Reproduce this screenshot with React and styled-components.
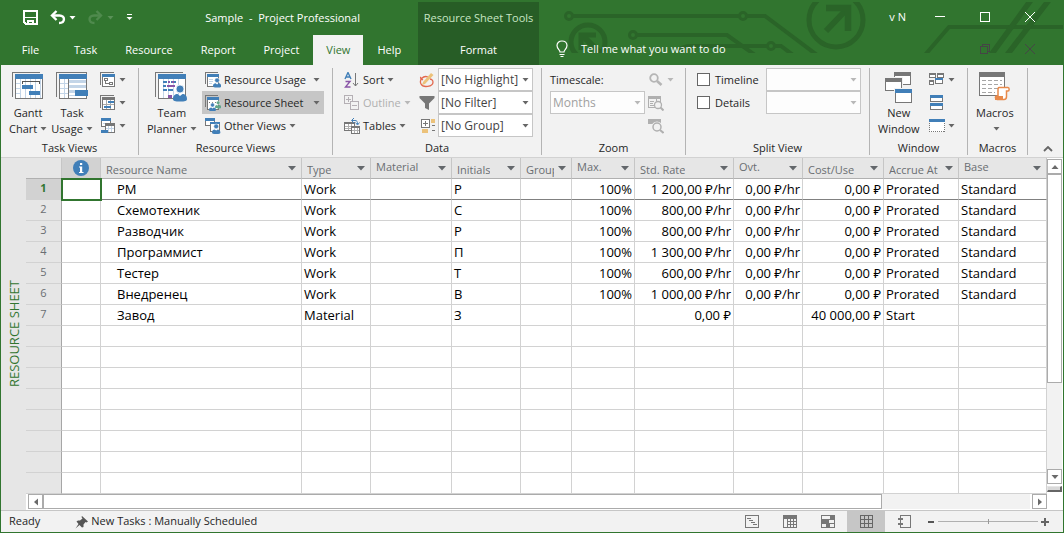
import styled, { createGlobalStyle, ThemeProvider } from "styled-components";

const theme = {
  green: "#31752f",
  darkGreen: "#275d26",
  ribbon: "#f2f2f2",
  header: "#e6e6e6",
  selected: "#c6c6c6",
  line: "#d2d2d2",
  text: "#262626",
};

const G = "#777777";
const B = "#417fb8";
const L = "#c3d5e8";

const columns = [
  { key: "name", label: "Resource Name", width: 201, indent: true },
  { key: "type", label: "Type", width: 69 },
  { key: "material", label: "Material", width: 81, raised: true },
  { key: "initials", label: "Initials", width: 69 },
  { key: "group", label: "Group", width: 51 },
  { key: "max", label: "Max.", width: 63, raised: true, right: true },
  { key: "std", label: "Std. Rate", width: 99, right: true },
  { key: "ovt", label: "Ovt.", width: 69, raised: true, right: true },
  { key: "cost", label: "Cost/Use", width: 81, right: true },
  { key: "accrue", label: "Accrue At", width: 75 },
  { key: "base", label: "Base", raised: true },
];

function worker(name, initials, std) {
  return {
    name,
    type: "Work",
    initials,
    max: "100%",
    std: `${std} ₽/hr`,
    ovt: "0,00 ₽/hr",
    cost: "0,00 ₽",
    accrue: "Prorated",
    base: "Standard",
  };
}

const resources = [
  worker("PM", "P", "1 200,00"),
  worker("Схемотехник", "С", "800,00"),
  worker("Разводчик", "Р", "800,00"),
  worker("Программист", "П", "1 300,00"),
  worker("Тестер", "Т", "600,00"),
  worker("Внедренец", "В", "1 000,00"),
  {
    name: "Завод",
    type: "Material",
    initials: "З",
    std: "0,00 ₽",
    cost: "40 000,00 ₽",
    accrue: "Start",
  },
];

const ROW_COUNT = 15;

/* ---------- icons ---------- */

function Icon({ w = 16, h = 16, smooth, children }) {
  return (
    <svg
      width={w}
      height={h}
      viewBox={`0 0 ${w} ${h}`}
      fill="none"
      shapeRendering={smooth ? "auto" : "crispEdges"}
      aria-hidden="true"
    >
      {children}
    </svg>
  );
}

function Caret({ color = "#666666" }) {
  return (
    <Icon w={7} h={4} smooth>
      <path d="M0.5 0H6.5L3.5 3.5Z" fill={color} />
    </Icon>
  );
}

function Frame({ x, y, w, h, bar, color = B }) {
  return (
    <>
      <rect x={x + 0.5} y={y + 0.5} width={w - 1} height={h - 1} fill="#fff" stroke={G} />
      <rect x={x} y={y} width={w} height={bar} fill={color} />
    </>
  );
}

function Person({ x, y, s = 1, color = B }) {
  return (
    <g transform={`translate(${x} ${y}) scale(${s})`} shapeRendering="auto">
      <circle cx="7" cy="4" r="4" fill={color} stroke="#fff" strokeWidth="0.8" />
      <path d="M0 14C0 10.500 2 9 4.500 9L7 11L9.500 9C12 9 14 10.500 14 14C14 16 12 16.500 7 16.500S0 16 0 14Z" fill={color} />
    </g>
  );
}

function GanttIcon() {
  return (
    <Icon w={32} h={32}>
      <path d="M0.5 25V0.500H28" stroke={G} />
      <Frame x={3} y={2} w={28} h={25} bar={5} />
      <path d="M8.500 7V26M13.500 7V26M18.500 7V26M23.500 7V26M28.500 7V26" stroke={L} />
      <path d="M4 11.500H8M4 16.500H8M4 21.500H8" stroke={L} />
      <path d="M10.500 12V9.500H27.500V12" stroke="#555" />
      <rect x="10" y="13" width="11" height="4" rx="1" fill={B} />
      <rect x="17" y="19" width="11" height="4" rx="1" fill={B} />
    </Icon>
  );
}

function TaskUsageIcon() {
  return (
    <Icon w={32} h={32}>
      <path d="M0.5 25V0.500H30.500V4" stroke={G} />
      <Frame x={3} y={2} w={28} h={25} bar={5} />
      <path d="M4 11.500H12M4 16.500H12M4 21.500H12M8.500 7V26" stroke={L} />
      <path d="M12.500 7V26" stroke={G} />
      <rect x="13" y="8" width="17" height="3" fill={L} />
      <rect x="13" y="13" width="17" height="3" fill={L} />
      <rect x="13" y="18" width="6" height="3" fill={L} />
      <path d="M13 23.500H30" stroke={L} />
      <rect x="19" y="18" width="13" height="6" rx="1" fill={B} />
    </Icon>
  );
}

function NetworkIcon() {
  return (
    <Icon>
      <path d="M0.500 13V0.500H14" stroke={G} />
      <Frame x={2} y={2} w={13} h={13} bar={3} />
      <rect x="4.500" y="6.500" width="3" height="2" stroke={G} />
      <rect x="9.500" y="10.500" width="3" height="2" stroke={G} />
      <path d="M5.500 9V11.500H9" stroke={G} />
    </Icon>
  );
}

function CalendarIcon() {
  return (
    <Icon>
      <path d="M0.500 13V0.500H14" stroke={G} />
      <Frame x={2} y={2} w={13} h={13} bar={3} color={G} />
      <path d="M6.500 5V14M10.500 5V14M3 9.500H14" stroke="#aaa" />
      <rect x="8" y="6" width="6" height="2" fill={B} />
      <rect x="4" y="11" width="7" height="2" fill={B} />
    </Icon>
  );
}

function OtherTaskIcon() {
  return (
    <Icon>
      <Frame x={1} y={0} w={10} h={9} bar={3} />
      <path d="M3 5.500H9" stroke={L} />
      <Frame x={5} y={5} w={10} h={10} bar={3} color={G} />
      <path d="M8.500 8V14M11.500 8V14M6 10.500H14" stroke={L} />
      <rect x="1" y="12" width="7" height="3" rx="1" fill={B} />
    </Icon>
  );
}

function TeamPlannerIcon() {
  return (
    <Icon w={33} h={32}>
      <path d="M0.500 25V0.500H28" stroke={G} />
      <Frame x={3} y={2} w={28} h={25} bar={5} />
      <path d="M8.500 7V26M13.500 7V26M18.500 7V26M23.500 7V26" stroke={L} />
      <path d="M8 10H12M16 10H21M8 18H12M13 18H18M8 14H11" stroke={B} strokeWidth="2" />
      <path d="M13 10H15M12 14H20M17 10H19" stroke="#8a56a8" strokeWidth="2" />
      <rect x="13" y="23" width="4" height="3" fill="#8a56a8" />
      <Person x={18} y={13} />
    </Icon>
  );
}

function ResourceUsageIcon() {
  return (
    <Icon>
      <path d="M0.500 12V0.500H13" stroke={G} />
      <Frame x={2} y={2} w={12} h={13} bar={3} />
      <path d="M4 7.500H8M4 9.500H8M4 11.500H7" stroke={L} />
      <Person x={8} y={6} s={0.58} />
    </Icon>
  );
}

function ResourceSheetIcon() {
  return (
    <Icon>
      <path d="M0.500 12V0.500H13" stroke={G} />
      <Frame x={2} y={2} w={12} h={13} bar={3} />
      <path d="M4 7.500H12" stroke={G} strokeDasharray="1 2" />
      <Person x={10} y={6} s={0.45} color="#5fa58a" />
      <Person x={4} y={8} s={0.5} />
    </Icon>
  );
}

function OtherViewsIcon() {
  return (
    <Icon>
      <Frame x={0} y={0} w={10} h={8} bar={3} />
      <Frame x={5} y={4} w={10} h={10} bar={2} />
      <Person x={7} y={6} s={0.6} />
    </Icon>
  );
}

function SortIcon() {
  return (
    <Icon smooth>
      <path d="M1 7L4 0.500L7 7M2 5H6" stroke={B} strokeWidth="1.400" />
      <path d="M1.500 9.500H6L1.500 15H6.500" stroke="#8a56a8" strokeWidth="1.400" />
      <path d="M11.500 1V14M9 11L11.500 14L14 11" stroke={G} />
    </Icon>
  );
}

function OutlineIcon() {
  return (
    <Icon>
      <rect x="0.500" y="0.500" width="8" height="8" stroke="#b5b0b5" />
      <path d="M4.500 2V7M2 4.500H7" stroke="#b5b0b5" />
      <rect x="6.500" y="6.500" width="8" height="8" fill="#f2f2f2" stroke="#b5b0b5" />
      <path d="M8 10.500H13" stroke="#b5b0b5" />
    </Icon>
  );
}

function TablesIcon() {
  return (
    <Icon>
      <Frame x={0} y={4} w={11} h={9} bar={2} color={G} />
      <path d="M1 8.500H10M1 10.500H10M4.500 6V12M7.500 6V12" stroke="#b0b0b0" />
      <Frame x={7} y={8} w={9} h={8} bar={2} color={G} />
      <path d="M8 12.500H15M10.500 10V15M13.500 10V15" stroke="#b0b0b0" />
      <path d="M8 2.500H11C13 2.500 13.500 3.500 13.500 6M10 0L7.500 2.500L10 5M11.500 4.500L13.500 7L15.500 4.500" stroke={B} shapeRendering="auto" />
    </Icon>
  );
}

function HighlightIcon() {
  return (
    <Icon smooth>
      <path d="M9 5C4 3 0 8 2 12C4 16 14 15 14 10C14 8 12 7 11 7M4 8C2 7 1 6 2 5" stroke="#e2694f" strokeWidth="1.300" />
      <path d="M3 13L4 10L12 1L14.500 3L6 12Z" fill="#ecc27a" />
    </Icon>
  );
}

function FilterIcon() {
  return (
    <Icon smooth>
      <path d="M0.500 1H15.500V3L10 8.500V15L6 13V8.500L0.500 3Z" fill={G} />
    </Icon>
  );
}

function GroupByIcon() {
  return (
    <Icon>
      <rect x="2.500" y="1.500" width="8" height="8" fill="#fff" stroke={G} />
      <path d="M6.500 3V8M4 5.500H9" stroke={G} />
      <rect x="12" y="1" width="4" height="4" fill="#ecc27a" />
      <path d="M13 7.500H16M13 12.500H16" stroke={G} />
      <rect x="3" y="11" width="6" height="4" fill="#ecc27a" />
    </Icon>
  );
}

function ZoomIcon() {
  return (
    <Icon smooth>
      <circle cx="6" cy="6" r="3.800" stroke="#b5b5b5" strokeWidth="1.800" />
      <path d="M9 9L13.500 13" stroke="#b5b5b5" strokeWidth="2.600" />
    </Icon>
  );
}

function EntireProjectIcon() {
  return (
    <Icon>
      <rect x="0.500" y="1.500" width="12" height="11" stroke="#b0b0b0" />
      <rect x="0" y="1" width="13" height="3" fill="#b0b0b0" />
      <path d="M2 6.500H6M2 8.500H5M2 10.500H6M8.500 4V6" stroke="#b0b0b0" />
      <g shapeRendering="auto">
        <circle cx="10" cy="10" r="3.500" fill="#f2f2f2" stroke="#b0b0b0" strokeWidth="1.300" />
        <path d="M12.500 12.500L15.500 15.500" stroke="#b0b0b0" strokeWidth="2" />
      </g>
    </Icon>
  );
}

function SelectedTasksIcon() {
  return (
    <Icon>
      <rect x="0" y="1" width="13" height="5" fill="#b0b0b0" />
      <g shapeRendering="auto">
        <circle cx="9" cy="9" r="4" fill="#f2f2f2" stroke="#f2f2f2" strokeWidth="3" />
        <circle cx="9" cy="9" r="4" stroke="#b0b0b0" strokeWidth="1.500" />
        <path d="M12 12L15.500 15" stroke="#b0b0b0" strokeWidth="2" />
      </g>
    </Icon>
  );
}

function NewWindowIcon() {
  return (
    <Icon w={28} h={32}>
      <Frame x={9} y={0} w={17} h={13} bar={4} color={G} />
      <rect x="0" y="5" width="18" height="15" fill="#f2f2f2" />
      <Frame x={0} y={6} w={17} h={13} bar={4} color={G} />
      <rect x="9" y="16" width="19" height="15" fill="#f2f2f2" />
      <Frame x={10} y={17} w={17} h={14} bar={4} />
    </Icon>
  );
}

function SwitchIcon() {
  return (
    <Icon>
      <Frame x={0} y={1} w={7} h={5} bar={2} color={G} />
      <Frame x={8} y={1} w={7} h={5} bar={2} color={G} />
      <Frame x={0} y={8} w={5} h={5} bar={2} color={G} />
      <Frame x={6} y={6} w={8} h={6} bar={2} />
    </Icon>
  );
}

function ArrangeIcon() {
  return (
    <Icon>
      <Frame x={1} y={0} w={13} h={7} bar={3} />
      <Frame x={1} y={8} w={13} h={7} bar={3} />
    </Icon>
  );
}

function HideIcon() {
  return (
    <Icon>
      <rect x="0.500" y="1.500" width="15" height="12" fill="#fff" stroke={G} strokeDasharray="1 1" />
      <rect x="0" y="1" width="16" height="3" fill={B} />
    </Icon>
  );
}

function MacrosIcon() {
  return (
    <Icon w={32} h={32}>
      <Frame x={0} y={0} w={26} h={24} bar={5} color={G} />
      <path d="M3 8.500H23M3 12.500H23M3 16.500H23M3 20.500H16" stroke="#a6a6a6" strokeDasharray="4 2" />
      <path
        d="M20 15.500H29C30.500 15.500 30.500 19 29 19H27.500V24.500C27.500 27 26 27.500 25 27.500H18C16 27.500 16 24 17.500 24H19V18C19 16.500 19.500 15.500 20 15.500Z"
        fill="#fff"
        stroke="#e8894a"
        strokeWidth="1.500"
        shapeRendering="auto"
      />
      <rect x="16" y="24" width="8" height="4" rx="1" fill="#e8894a" />
    </Icon>
  );
}

function CircuitArt() {
  return (
    <Circuit width="534" height="53" viewBox="0 0 534 53" fill="none" stroke="#2a6428" strokeWidth="4" aria-hidden="true">
      <circle cx="40" cy="16" r="3.500" strokeWidth="3" />
      <circle cx="214" cy="16" r="3.500" strokeWidth="3" />
      <path d="M44 16H210M218 16H236L288 55" />
      <circle cx="104" cy="35" r="3.500" strokeWidth="3" />
      <path d="M108 35H198L226 55" />
      <circle cx="242" cy="46" r="3.500" strokeWidth="3" />
      <path d="M150 50C154 46 158 46 162 46H238M246 46H252L264 55" />
      <circle cx="307" cy="20" r="27" strokeWidth="5" />
      <path d="M297 31L316 11" strokeWidth="6" />
      <path d="M297 8H319V31" strokeWidth="6.500" />
      <circle cx="59" cy="42" r="17" strokeWidth="5" />
      <path d="M54 36L70 52" strokeWidth="6" />
      <path d="M67 35H52V50" strokeWidth="5" />
      <path d="M396 55L420 27H534" />
      <path d="M462 55L502 0M478 55L520 0" strokeWidth="5.500" />
    </Circuit>
  );
}

/* ---------- small pieces ---------- */

function BigTool({ icon, lines, caret = true }) {
  return (
    <BigButton type="button">
      {icon}
      <span>
        {lines[0]}
        <br />
        {lines[1]}
        {caret && <Caret />}
      </span>
    </BigButton>
  );
}

function Tool({ icon, label, caret = true, disabled, active, wide, name }) {
  return (
    <ToolButton type="button" disabled={disabled} $active={active} $wide={wide} aria-label={name}>
      {icon}
      {label && <span>{label}</span>}
      {caret && <Caret color={disabled ? "#b8b8b8" : "#666666"} />}
    </ToolButton>
  );
}

function Combo({ name, value, disabled }) {
  return (
    <ComboBox>
      <ComboSelect aria-label={name} disabled={disabled} defaultValue={value}>
        <option>{value}</option>
      </ComboSelect>
      <Caret color={disabled ? "#b8b8b8" : "#666666"} />
    </ComboBox>
  );
}

function RibbonGroup({ title, children }) {
  return (
    <Group aria-label={title}>
      <GroupBody>{children}</GroupBody>
      <GroupTitle>{title}</GroupTitle>
    </Group>
  );
}

/* ---------- sections ---------- */

function Header() {
  return (
    <Top>
      <CircuitArt />
      <TopColumn>
        <TitleRow>
          <QuickAccess>
            <IconButton type="button" aria-label="Save">
              <Icon w={15} h={15}>
                <path d="M1 1H14V14H3L1 12Z" stroke="#fff" strokeWidth="2" />
                <path d="M2 7.500H13" stroke="#fff" />
                <path d="M5 14V11H10V14" stroke="#fff" strokeWidth="2" />
              </Icon>
            </IconButton>
            <IconButton type="button" aria-label="Undo">
              <Icon smooth>
                <path d="M2 5.500H9.500C15.500 5.500 15.500 13 9 13" stroke="#fff" strokeWidth="2.400" />
                <path d="M6.500 1L2 5.500L6.500 10" stroke="#fff" strokeWidth="2.400" />
              </Icon>
              <Caret color="#fff" />
            </IconButton>
            <IconButton type="button" aria-label="Redo" disabled>
              <Icon smooth>
                <path d="M13 5.500H6C0 5.500 0 13 6.500 13" stroke="#4f8a4d" strokeWidth="2.400" />
                <path d="M8.500 1L13 5.500L8.500 10" stroke="#4f8a4d" strokeWidth="2.400" />
              </Icon>
              <Caret color="#5a9158" />
            </IconButton>
            <IconButton type="button" aria-label="Customize">
              <Icon w={7} h={7} smooth>
                <path d="M1 0H6V1H1ZM0.500 3H6.500L3.500 6Z" fill="#fff" />
              </Icon>
            </IconButton>
          </QuickAccess>
          <DocTitle>Sample&nbsp; -&nbsp; Project Professional</DocTitle>
        </TitleRow>
        <Tabs aria-label="Ribbon tabs">
          <FileTab href="#file">File</FileTab>
          <Tab href="#task">Task</Tab>
          <Tab href="#resource">Resource</Tab>
          <Tab href="#report">Report</Tab>
          <Tab href="#project">Project</Tab>
          <Tab href="#view" $active>
            View
          </Tab>
          <Tab href="#help">Help</Tab>
        </Tabs>
      </TopColumn>
      <ContextTab>
        <ContextTitle>Resource Sheet Tools</ContextTitle>
        <Tab href="#format">Format</Tab>
      </ContextTab>
      <TopColumn $grow>
        <ControlRow>
          <User>v N</User>
          <WindowButton type="button" aria-label="Minimize">
            <Icon w={10} h={10}>
              <path d="M0 4.500H10" stroke="#fff" />
            </Icon>
          </WindowButton>
          <WindowButton type="button" aria-label="Maximize">
            <Icon w={10} h={10}>
              <rect x="0.500" y="0.500" width="9" height="9" stroke="#fff" />
            </Icon>
          </WindowButton>
          <WindowButton type="button" aria-label="Close">
            <Icon w={10} h={10} smooth>
              <path d="M0 0L10 10M10 0L0 10" stroke="#fff" />
            </Icon>
          </WindowButton>
        </ControlRow>
        <SecondRow>
          <TellMe type="button">
            <Icon w={12} h={18} smooth>
              <path d="M4 12C4 10 1 9 1 5.500C1 3 3 1 6 1S11 3 11 5.500C11 9 8 10 8 12Z" stroke="#fff" strokeWidth="1.200" />
              <path d="M3.500 14.500H8.500M4.500 16.500H7.500" stroke="#fff" />
            </Icon>
            Tell me what you want to do
          </TellMe>
          <WindowButton type="button" aria-label="Restore document">
            <Icon w={10} h={10}>
              <rect x="0.500" y="2.500" width="7" height="7" stroke="#454545" />
              <path d="M2.500 2V0.500H9.500V7.500H8" stroke="#454545" />
            </Icon>
          </WindowButton>
          <WindowButton type="button" aria-label="Close document">
            <Icon w={10} h={10} smooth>
              <path d="M0 0L10 10M10 0L0 10" stroke="#454545" />
            </Icon>
          </WindowButton>
        </SecondRow>
      </TopColumn>
    </Top>
  );
}

function Ribbon() {
  return (
    <RibbonBar>
      <RibbonGroup title="Task Views">
        <BigTool icon={<GanttIcon />} lines={["Gantt", "Chart"]} />
        <BigTool icon={<TaskUsageIcon />} lines={["Task", "Usage"]} />
        <Stack>
          <Tool name="Network Diagram" icon={<NetworkIcon />} />
          <Tool name="Calendar" icon={<CalendarIcon />} />
          <Tool name="Other Task Views" icon={<OtherTaskIcon />} />
        </Stack>
      </RibbonGroup>
      <RibbonGroup title="Resource Views">
        <BigTool icon={<TeamPlannerIcon />} lines={["Team", "Planner"]} />
        <WideStack>
          <Tool wide icon={<ResourceUsageIcon />} label="Resource Usage" />
          <Tool wide active icon={<ResourceSheetIcon />} label="Resource Sheet" />
          <Tool icon={<OtherViewsIcon />} label="Other Views" />
        </WideStack>
      </RibbonGroup>
      <RibbonGroup title="Data">
        <Stack>
          <Tool icon={<SortIcon />} label="Sort" />
          <Tool disabled icon={<OutlineIcon />} label="Outline" />
          <Tool icon={<TablesIcon />} label="Tables" />
        </Stack>
        <Stack>
          <Field>
            <HighlightIcon />
            <Combo name="Highlight" value="[No Highlight]" />
          </Field>
          <Field>
            <FilterIcon />
            <Combo name="Filter" value="[No Filter]" />
          </Field>
          <Field>
            <GroupByIcon />
            <Combo name="Group by" value="[No Group]" />
          </Field>
        </Stack>
      </RibbonGroup>
      <RibbonGroup title="Zoom">
        <Stack>
          <TextLabel htmlFor="timescale">Timescale:</TextLabel>
          <ComboBox>
            <ComboSelect id="timescale" disabled defaultValue="Months">
              <option>Months</option>
            </ComboSelect>
            <Caret color="#b8b8b8" />
          </ComboBox>
        </Stack>
        <Stack>
          <Tool name="Zoom" disabled icon={<ZoomIcon />} />
          <Tool name="Entire Project" disabled caret={false} icon={<EntireProjectIcon />} />
          <Tool name="Selected Tasks" disabled caret={false} icon={<SelectedTasksIcon />} />
        </Stack>
      </RibbonGroup>
      <RibbonGroup title="Split View">
        <Stack>
          <CheckLabel>
            <Check type="checkbox" />
            Timeline
          </CheckLabel>
          <CheckLabel>
            <Check type="checkbox" />
            Details
          </CheckLabel>
        </Stack>
        <Stack>
          <Combo name="Timeline view" value="" disabled />
          <Combo name="Details view" value="" disabled />
        </Stack>
      </RibbonGroup>
      <RibbonGroup title="Window">
        <BigTool icon={<NewWindowIcon />} lines={["New", "Window"]} caret={false} />
        <Stack>
          <Tool name="Switch Windows" icon={<SwitchIcon />} />
          <Tool name="Arrange All" caret={false} icon={<ArrangeIcon />} />
          <Tool name="Hide" icon={<HideIcon />} />
        </Stack>
      </RibbonGroup>
      <RibbonGroup title="Macros">
        <BigTool icon={<MacrosIcon />} lines={["Macros", ""]} />
      </RibbonGroup>
      <Collapse type="button" aria-label="Collapse the ribbon">
        <Icon w={10} h={6} smooth>
          <path d="M1 5L5 1L9 5" stroke="#666" strokeWidth="1.800" />
        </Icon>
      </Collapse>
    </RibbonBar>
  );
}

function Sheet() {
  const rows = Array.from({ length: ROW_COUNT }, (_, i) => resources[i] || {});

  return (
    <Table>
      <colgroup>
        <col style={{ width: 36 }} />
        <col style={{ width: 39 }} />
        {columns.map((c) => (
          <col key={c.key} style={{ width: c.width }} />
        ))}
      </colgroup>
      <thead>
        <tr>
          <HeadCell aria-label="Row" />
          <HeadCell $info aria-label="Indicators">
            <Icon w={16} h={16} smooth>
              <circle cx="8" cy="8" r="8" fill={B} />
              <path d="M7 3H9.200V5H7ZM6 6.500H9.200V12H10.500V13H6V12H7V7.500H6Z" fill="#fff" />
            </Icon>
          </HeadCell>
          {columns.map((c) => (
            <HeadCell key={c.key}>
              <HeadInner $raised={c.raised}>
                <span>{c.label}</span>
                <Icon w={8} h={5} smooth>
                  <path d="M0 0H8L4 4.500Z" fill="#63676b" />
                </Icon>
              </HeadInner>
            </HeadCell>
          ))}
        </tr>
      </thead>
      <tbody>
        {rows.map((row, i) => (
          <Row key={i} $current={i === 0}>
            <RowNumber scope="row" $current={i === 0}>
              {resources[i] ? i + 1 : ""}
            </RowNumber>
            <Cell $selected={i === 0} />
            {columns.map((c) => (
              <Cell key={c.key} $right={c.right} $indent={c.indent}>
                {row[c.key]}
              </Cell>
            ))}
          </Row>
        ))}
      </tbody>
    </Table>
  );
}

function Arrow({ turn }) {
  return (
    <Icon w={8} h={8} smooth>
      <path d="M0.500 2H7.500L4 6Z" fill="#6a6a6a" transform={`rotate(${turn} 4 4)`} />
    </Icon>
  );
}

function StatusBar() {
  return (
    <Status>
      <StatusText>Ready</StatusText>
      <NewTasks type="button">
        <Icon w={14} h={14} smooth>
          <path d="M7 1L13 6.500L11.500 7.500L10.500 7L8.500 9.500L8.500 12L7 12.500L4.500 10L0.500 13.500L3.500 9L1.500 6.500L3 5.500H5L7.500 3.500L6.500 2Z" fill="#555" />
        </Icon>
        <StatusText>New Tasks : Manually Scheduled</StatusText>
      </NewTasks>
      <ViewButtons>
        <ViewButton type="button" aria-label="Gantt Chart">
          <Icon w={14} h={13}>
            <rect x="0.500" y="0.500" width="13" height="12" stroke={G} />
            <path d="M2 3.500H6M4 5.500H8M6 7.500H10M8 9.500H12" stroke={G} />
          </Icon>
        </ViewButton>
        <ViewButton type="button" aria-label="Task Usage">
          <Icon w={14} h={13}>
            <rect x="0.500" y="0.500" width="13" height="12" stroke={G} />
            <rect x="0" y="0" width="14" height="4" fill={G} />
            <path d="M4.500 4V12M7.500 4V12M10.500 4V12M4 6.500H14M4 9.500H14" stroke={G} />
          </Icon>
        </ViewButton>
        <ViewButton type="button" aria-label="Team Planner">
          <Icon w={14} h={13}>
            <rect x="0.500" y="0.500" width="13" height="12" stroke={G} />
            <rect x="9" y="0" width="5" height="4" fill={G} />
            <rect x="0" y="4" width="8" height="4" fill={G} />
            <rect x="5" y="8" width="4" height="4" fill={G} />
            <path d="M0 4.500H14M0 8.500H14" stroke={G} />
          </Icon>
        </ViewButton>
        <ViewButton type="button" aria-label="Resource Sheet" $active>
          <Icon w={13} h={13}>
            <path d="M0.500 0.500H12.500V12.500H0.500ZM4.500 0V13M8.500 0V13M0 4.500H13M0 8.500H13" stroke="#666" />
          </Icon>
        </ViewButton>
        <ViewButton type="button" aria-label="Report">
          <Icon w={13} h={13}>
            <path d="M2.500 0V13M2 0.500H12.500V12.500H2" stroke={G} />
            <path d="M0 4H5M0 9H5" stroke={G} strokeWidth="2" />
          </Icon>
        </ViewButton>
      </ViewButtons>
      <IconButton type="button" aria-label="Zoom out">
        <Icon w={6} h={8}>
          <path d="M0 4H6" stroke="#555" strokeWidth="2" />
        </Icon>
      </IconButton>
      <ZoomSlider type="range" aria-label="Zoom level" defaultValue="50" />
      <IconButton type="button" aria-label="Zoom in">
        <Icon w={8} h={8}>
          <path d="M0 4H8M4 0V8" stroke="#666" strokeWidth="2" />
        </Icon>
      </IconButton>
    </Status>
  );
}

export default function App() {
  return (
    <ThemeProvider theme={theme}>
      <GlobalStyle />
      <Window>
        <Header />
        <Ribbon />
        <Workspace>
          <SideStrip>
            <SideLabel>RESOURCE SHEET</SideLabel>
          </SideStrip>
          <SheetArea>
            <SheetRow>
              <TableClip>
                <Sheet />
              </TableClip>
              <VerticalScroll>
                <ScrollButton type="button" aria-label="Scroll up">
                  <Arrow turn={180} />
                </ScrollButton>
                <ScrollTrack $vertical>
                  <ScrollThumb $size="71%" $vertical />
                </ScrollTrack>
                <ScrollButton type="button" aria-label="Scroll down">
                  <Arrow turn={0} />
                </ScrollButton>
                <Splitter />
              </VerticalScroll>
            </SheetRow>
            <HorizontalScroll>
              <ScrollButton type="button" aria-label="Scroll left">
                <Arrow turn={90} />
              </ScrollButton>
              <ScrollTrack>
                <ScrollThumb $size="85%" />
              </ScrollTrack>
              <ScrollButton type="button" aria-label="Scroll right">
                <Arrow turn={-90} />
              </ScrollButton>
            </HorizontalScroll>
          </SheetArea>
        </Workspace>
        <StatusBar />
      </Window>
    </ThemeProvider>
  );
}

/* ---------- styles ---------- */

const GlobalStyle = createGlobalStyle`
  * {
    box-sizing: border-box;
  }

  body {
    margin: 0;
    font-family: "Open Sans", "Noto Sans", sans-serif;
    font-size: 11px;
    line-height: 16px;
  }

  button, select, input {
    font: inherit;
    color: inherit;
    margin: 0;
  }

  button {
    padding: 0;
    border: 0;
    background: none;
  }

  a {
    color: inherit;
    text-decoration: none;
  }

  svg {
    display: block;
    flex: none;
  }
`;

const Window = styled.div`
  display: flex;
  flex-direction: column;
  height: 100vh;
  border: 1px solid ${(props) => props.theme.green};
  border-top: 0;
  background-color: ${(props) => props.theme.ribbon};
  color: ${(props) => props.theme.text};
`;

const Top = styled.header`
  position: relative;
  display: flex;
  height: 65px;
  flex: none;
  background-color: ${(props) => props.theme.green};
  color: #ffffff;
`;

const Circuit = styled.svg`
  position: absolute;
  top: 0;
  right: 0;
  clip-path: inset(2px 0 0 0);
`;

const TopColumn = styled.div`
  position: relative;
  display: flex;
  flex-direction: column;
  width: 417px;
  ${(props) => props.$grow && "flex: 1; width: auto;"}
`;

const TitleRow = styled.div`
  display: flex;
  align-items: center;
  height: 35px;
  padding-right: 58px;
`;

const QuickAccess = styled.div`
  display: flex;
  align-items: center;
  gap: 12px;
  padding-left: 22px;
`;

const IconButton = styled.button`
  display: flex;
  align-items: center;
  gap: 3px;
`;

const DocTitle = styled.h1`
  margin: 0 0 0 auto;
  font-size: 11px;
  font-weight: 400;
`;

const Tabs = styled.nav`
  display: flex;
  height: 30px;
`;

const Tab = styled.a`
  display: flex;
  align-items: center;
  justify-content: center;
  height: 30px;
  padding: 0 14px;
  ${(props) =>
    props.$active &&
    `
    padding: 0 13px;
    background-color: ${props.theme.ribbon};
    color: ${props.theme.green};
  `}
`;

const FileTab = styled(Tab)`
  width: 59px;
`;

const ContextTab = styled.div`
  position: relative;
  display: flex;
  flex-direction: column;
  justify-content: space-between;
  width: 121px;
  margin-top: 2px;
  background-color: ${(props) => props.theme.darkGreen};
`;

const ContextTitle = styled.div`
  padding-top: 8px;
  text-align: center;
  white-space: nowrap;
  color: #c8e6c4;
`;

const ControlRow = styled.div`
  display: flex;
  align-items: center;
  justify-content: flex-end;
  height: 33px;
  padding-right: 11px;
`;

const SecondRow = styled(ControlRow)`
  height: 32px;
  justify-content: flex-start;
`;

const User = styled.span`
  padding-right: 11px;
`;

const WindowButton = styled.button`
  display: flex;
  justify-content: center;
  width: 45px;
`;

const TellMe = styled.button`
  display: flex;
  align-items: center;
  gap: 13px;
  margin-right: auto;
  padding-left: 17px;
`;

const RibbonBar = styled.div`
  display: grid;
  grid-template-columns: 138fr 194fr 209fr 144fr 184fr 98fr 60fr 35fr;
  flex: none;
  height: 93px;
  padding-top: 3px;
  border-bottom: 1px solid ${(props) => props.theme.line};
`;

const Group = styled.section`
  display: flex;
  flex-direction: column;
  justify-content: space-between;
  min-width: 0;
  margin-bottom: 2px;
  border-right: 1px solid #b4b4b4;
`;

const GroupBody = styled.div`
  display: flex;
  justify-content: space-between;
  padding: 0 8px;
`;

const GroupTitle = styled.div`
  text-align: center;
  line-height: 14px;
`;

const Stack = styled.div`
  display: flex;
  flex-direction: column;
`;

const WideStack = styled(Stack)`
  width: 122px;
`;

const BigButton = styled.button`
  display: flex;
  flex-direction: column;
  align-items: center;
  gap: 1px;
  padding-top: 4px;
  white-space: nowrap;

  span svg {
    display: inline-block;
    margin-left: 3px;
    vertical-align: 2px;
  }
`;

const ToolButton = styled.button`
  display: flex;
  align-items: center;
  gap: 3px;
  height: 23px;
  padding: 0 4px 0 3px;
  white-space: nowrap;
  background-color: ${(props) => (props.$active ? props.theme.selected : "transparent")};

  &:disabled {
    color: #b0b0b0;
  }

  > svg:last-child {
    margin-left: ${(props) => (props.$wide ? "auto" : "0")};
  }
`;

const Field = styled.div`
  display: flex;
  align-items: center;
  gap: 3px;
`;

const ComboBox = styled.div`
  position: relative;
  width: 95px;

  svg {
    position: absolute;
    top: 10px;
    right: 4px;
    pointer-events: none;
  }
`;

const ComboSelect = styled.select`
  display: block;
  appearance: none;
  width: 100%;
  height: 23px;
  padding: 0 2px;
  border: 1px solid #c6c6c6;
  border-radius: 0;
  background-color: #ffffff;
  color: #444444;
  font-size: 12px;

  &:disabled {
    background-color: #fdfdfd;
    color: #a0a0a0;
    opacity: 1;
  }
`;

const TextLabel = styled.label`
  line-height: 23px;
`;

const CheckLabel = styled.label`
  display: flex;
  align-items: center;
  gap: 5px;
  height: 23px;
  padding-left: 3px;
`;

const Check = styled.input`
  appearance: none;
  width: 13px;
  height: 13px;
  border: 1px solid #666666;
  background-color: #ffffff;
`;

const Collapse = styled.button`
  display: flex;
  align-items: flex-end;
  justify-content: center;
  padding: 0 0 5px 5px;
`;

const Workspace = styled.main`
  display: flex;
  flex: 1;
  min-height: 0;
  background-color: #ffffff;
`;

const SideStrip = styled.aside`
  display: flex;
  align-items: center;
  justify-content: center;
  width: 25px;
  background-color: ${(props) => props.theme.header};
`;

const SideLabel = styled.span`
  writing-mode: vertical-rl;
  transform: rotate(180deg);
  font-size: 13px;
  font-weight: 500;
  white-space: nowrap;
  color: ${(props) => props.theme.green};
`;

const SheetArea = styled.div`
  display: flex;
  flex-direction: column;
  flex: 1;
  min-width: 0;
`;

const SheetRow = styled.div`
  display: flex;
  flex: 1;
  min-height: 0;
`;

const TableClip = styled.div`
  flex: 1;
  overflow: hidden;
`;

const Table = styled.table`
  width: 100%;
  table-layout: fixed;
  border-collapse: separate;
  border-spacing: 0;
`;

const HeadCell = styled.th`
  height: 21px;
  padding: 0;
  border-right: 1px solid #c6c6c6;
  border-bottom: 1px solid #b0b0b0;
  background-color: ${(props) => (props.$info ? props.theme.line : props.theme.header)};
  font-weight: 400;
  color: #6a6e72;

  > svg {
    margin: 0 auto;
  }
`;

const HeadInner = styled.div`
  display: flex;
  align-items: center;
  justify-content: space-between;
  gap: 4px;
  height: 20px;
  padding: 0 5px;
  white-space: nowrap;

  span {
    overflow: hidden;
    padding: ${(props) => (props.$raised ? "0 0 2px" : "4px 0 0")};
  }
`;

const Row = styled.tr`
  > td {
    border-bottom-color: ${(props) => (props.$current ? "#808080" : props.theme.line)};
  }
`;

const RowNumber = styled.th`
  height: 21px;
  padding: 0 0 2px;
  border-right: 1px solid #a6a6a6;
  border-bottom: 1px solid ${(props) => props.theme.line};
  background-color: ${(props) => (props.$current ? props.theme.line : props.theme.header)};
  color: ${(props) => (props.$current ? props.theme.green : "#6a6e72")};
  font-weight: ${(props) => (props.$current ? 700 : 400)};
`;

const Cell = styled.td`
  height: 21px;
  padding: 0 2px 0 ${(props) => (props.$indent ? "16px" : "2px")};
  border-right: 1px solid ${(props) => props.theme.line};
  border-bottom: 1px solid ${(props) => props.theme.line};
  font-size: 13px;
  text-align: ${(props) => (props.$right ? "right" : "left")};
  white-space: nowrap;
  color: #000000;
  ${(props) => props.$selected && `outline: 2px solid ${props.theme.green}; outline-offset: -1px;`}
`;

const VerticalScroll = styled.div`
  display: flex;
  flex-direction: column;
  width: 15px;
  margin-right: 1px;
  padding-top: 1px;
`;

const HorizontalScroll = styled.div`
  display: flex;
  margin: 0 16px 1px 2px;
`;

const ScrollButton = styled.button`
  display: flex;
  align-items: center;
  justify-content: center;
  flex: none;
  width: 15px;
  height: 15px;
  border: 1px solid #ababab;
  background-color: #ffffff;
`;

const ScrollTrack = styled.div`
  flex: 1;
  background-color: ${(props) => props.theme.ribbon};
  margin: ${(props) => (props.$vertical ? "0" : "0 2px 0 0")};
`;

const ScrollThumb = styled.div`
  width: ${(props) => (props.$vertical ? "15px" : props.$size)};
  height: ${(props) => (props.$vertical ? props.$size : "15px")};
  border: 1px solid #ababab;
  background-color: #ffffff;
`;

const Splitter = styled.div`
  height: 6px;
  margin: 2px 0;
  border: 1px solid #e6e6e6;
  border-right: 2px solid #666666;
  border-bottom: 2px solid #666666;
  background-color: #d8d8d8;
`;

const Status = styled.footer`
  display: flex;
  align-items: center;
  flex: none;
  height: 22px;
  padding: 0 14px 0 8px;
  border-top: 1px solid ${(props) => props.theme.selected};
`;

const StatusText = styled.span`
  padding-bottom: 2px;
`;

const NewTasks = styled.button`
  display: flex;
  align-items: center;
  gap: 2px;
  margin-left: 35px;
`;

const ViewButtons = styled.div`
  display: flex;
  align-self: stretch;
  margin: 0 5px 0 auto;
`;

const ViewButton = styled.button`
  display: flex;
  align-items: center;
  justify-content: center;
  width: 38px;
  background-color: ${(props) => (props.$active ? props.theme.selected : "transparent")};
`;

const ZoomSlider = styled.input`
  appearance: none;
  width: 100px;
  height: 8px;
  margin: 0 3px 0 4px;
  background: linear-gradient(#b0b0b0, #b0b0b0) center / 100% 1px no-repeat;

  &::-webkit-slider-thumb {
    appearance: none;
    width: 1px;
    height: 5px;
    background-color: #999999;
  }
`;
